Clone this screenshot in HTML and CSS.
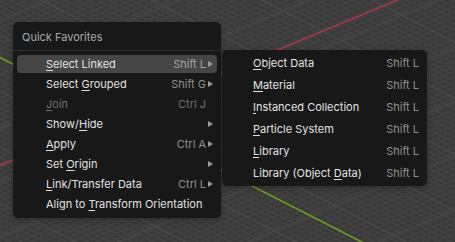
FILE: index.html
```html
<!DOCTYPE html>
<html lang="en">
<head>
  <meta charset="UTF-8">
  <meta name="viewport" content="width=device-width, initial-scale=1.0">
  <title>Quick Favorites</title>
  <link rel="stylesheet" href="styles.css">
</head>
<body>

<div class="viewport">
  <svg class="viewport-grid" width="455" height="242" viewBox="0 0 455 242">
    <defs>
      <pattern id="fineA" width="60" height="5" patternUnits="userSpaceOnUse" patternTransform="rotate(-22.6)">
        <line x1="0" y1="0.5" x2="60" y2="0.5" stroke="#444444" stroke-width="1"/>
      </pattern>
      <pattern id="fineB" width="60" height="5" patternUnits="userSpaceOnUse" patternTransform="rotate(27)">
        <line x1="0" y1="0.5" x2="60" y2="0.5" stroke="#444444" stroke-width="1"/>
      </pattern>
      <pattern id="majorA" width="60" height="50" patternUnits="userSpaceOnUse" patternTransform="rotate(-22.6) translate(0 18)">
        <line x1="0" y1="0.5" x2="60" y2="0.5" stroke="#4b4b4b" stroke-width="1.2"/>
      </pattern>
      <pattern id="majorB" width="60" height="50" patternUnits="userSpaceOnUse" patternTransform="rotate(27) translate(0 31)">
        <line x1="0" y1="0.5" x2="60" y2="0.5" stroke="#4b4b4b" stroke-width="1.2"/>
      </pattern>
    </defs>
    <rect width="455" height="242" fill="#3a3a3a"/>
    <rect width="455" height="242" fill="url(#fineA)"/>
    <rect width="455" height="242" fill="url(#fineB)"/>
    <rect width="455" height="242" fill="url(#majorA)"/>
    <rect width="455" height="242" fill="url(#majorB)"/>
    <!-- axis lines -->
    <line x1="0" y1="165.4" x2="455" y2="-23.9" stroke="#a83a4e" stroke-width="1.6"/>
    <line x1="0" y1="57.5" x2="455" y2="289.5" stroke="#709a22" stroke-width="1.6"/>
  </svg>

  <div class="menus">
    <div class="menu">
      <div class="menu-title">Quick Favorites</div>
      <div class="menu-items">
        <div class="menu-item active has-sub"><span class="label"><u>S</u>elect Linked</span><span class="shortcut">Shift L</span></div>
        <div class="menu-item has-sub"><span class="label">Select <u>G</u>rouped</span><span class="shortcut">Shift G</span></div>
        <div class="menu-item disabled"><span class="label"><u>J</u>oin</span><span class="shortcut">Ctrl J</span></div>
        <div class="menu-item has-sub"><span class="label">Show/<u>H</u>ide</span></div>
        <div class="menu-item has-sub"><span class="label"><u>A</u>pply</span><span class="shortcut">Ctrl A</span></div>
        <div class="menu-item has-sub"><span class="label">Set <u>O</u>rigin</span></div>
        <div class="menu-item has-sub"><span class="label"><u>L</u>ink/Transfer Data</span><span class="shortcut">Ctrl L</span></div>
        <div class="menu-item"><span class="label">Align to <u>T</u>ransform Orientation</span></div>
      </div>
    </div>

    <div class="menu submenu">
      <div class="menu-item"><span class="label"><u>O</u>bject Data</span><span class="shortcut">Shift L</span></div>
      <div class="menu-item"><span class="label"><u>M</u>aterial</span><span class="shortcut">Shift L</span></div>
      <div class="menu-item"><span class="label"><u>I</u>nstanced Collection</span><span class="shortcut">Shift L</span></div>
      <div class="menu-item"><span class="label"><u>P</u>article System</span><span class="shortcut">Shift L</span></div>
      <div class="menu-item"><span class="label"><u>L</u>ibrary</span><span class="shortcut">Shift L</span></div>
      <div class="menu-item"><span class="label">Library (Object <u>D</u>ata)</span><span class="shortcut">Shift L</span></div>
    </div>
  </div>
</div>

</body>
</html>
```

FILE: styles.css
```css
body {
  margin: 0;
  padding: 0;
  font-family: Inter, "Noto Sans", sans-serif;
  font-size: 11px;
  background-color: #3a3a3a;
  overflow: hidden;
}

.viewport {
  position: relative;
  width: 455px;
  height: 242px;
  overflow: hidden;
}

.viewport-grid {
  position: absolute;
  left: 0;
  top: 0;
  display: block;
}

.menus {
  position: absolute;
  left: 13px;
  top: 22px;
  display: flex;
  align-items: flex-start;
}

.menu {
  background-color: #181818;
  border-radius: 5px;
  box-shadow: 0 2px 6px rgba(0, 0, 0, 0.3);
  width: 208px;
}

.menu-title {
  height: 28px;
  line-height: 30px;
  padding-left: 9px;
  color: #a8a8a8;
  border-bottom: 1px solid #2b2b2b;
}

.menu-items {
  display: flex;
  flex-direction: column;
  padding: 3px 0 4px;
}

.menu-item {
  position: relative;
  display: flex;
  align-items: center;
  height: 18px;
  margin: 1px 4px;
  padding: 0 11px 0 29px;
  border-radius: 4px;
  color: #e2e2e2;
  white-space: nowrap;
}

.menu-item .label {
  flex: 1;
}

.menu-item .shortcut {
  color: #8f8f8f;
}

.menu-item u {
  text-decoration: underline;
  text-decoration-thickness: 1px;
  text-underline-offset: 2px;
}

.menu-item.active {
  background-color: #464646;
}

.menu-item.active .shortcut {
  color: #a4a4a4;
}

.menu-item.disabled,
.menu-item.disabled .shortcut {
  color: #6f6f6f;
}

.menu-item.has-sub::after {
  content: "";
  position: absolute;
  right: 4px;
  top: 6px;
  border-left: 5px solid #9a9a9a;
  border-top: 3px solid transparent;
  border-bottom: 3px solid transparent;
}

.submenu {
  width: 205px;
  margin-top: 28px;
  margin-left: 1px;
  padding: 2px 0;
  display: flex;
  flex-direction: column;
}

.submenu .menu-item {
  height: 22px;
  margin: 0;
  padding: 0 8px 0 31px;
  border-radius: 0;
}
```
